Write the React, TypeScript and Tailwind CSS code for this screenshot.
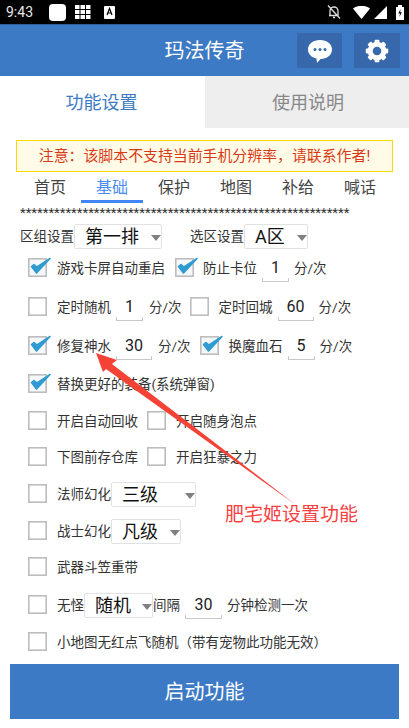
import React from "react";

const Box = ({ on }: { on?: boolean }) => (
  <svg width="24" height="24" viewBox="0 0 24 24" className="shrink-0 overflow-visible">
    <rect x="0.8" y="2.8" width="17.4" height="17.4" fill={on ? "#f4f8fb" : "#fff"} stroke="#bdbdbd" strokeWidth="1.6" />
    {on && <path d="M3.5 10.5 L8.5 17 L22 2.5 L9 11 L6 8.5 Z" fill="#2f9bd1" stroke="#2f9bd1" strokeWidth="1.6" strokeLinejoin="round" />}
  </svg>
);

const Num = ({ v, w }: { v: string; w: number }) => (
  <div className="flex flex-col items-center shrink-0" style={{ width: w }}>
    <div className="text-[16px] leading-[28px] text-[#222] h-[24px]">{v}</div>
    <div className="h-[4px] w-full border-x border-b border-[#c8c8c8]" />
  </div>
);

const Sel = ({ v, w, tri }: { v: string; w: number; tri: number }) => (
  <div className="h-[25px] border border-[#e2e2e2] rounded-[2px] flex items-center relative shrink-0 bg-white" style={{ width: w }}>
    <span className="text-[18px] leading-[25px] text-[#111] pl-[10px]">{v}</span>
    <span className="absolute top-[10px] w-0 h-0 border-x-[5px] border-x-transparent border-t-[6px] border-t-[#808080]" style={{ left: tri }} />
  </div>
);

const L = ({ children, cls = "" }: { children: React.ReactNode; cls?: string }) => (
  <span className={"text-[13.5px] text-[#333] whitespace-nowrap shrink-0 " + cls}>{children}</span>
);

export default function App() {
  return (
    <div className="w-[409px] h-[728px] bg-white relative overflow-hidden flex flex-col font-['Roboto','Noto_Sans_CJK_SC',sans-serif]">
      <div className="h-[24px] bg-black flex items-center text-white shrink-0 pl-[6px] pr-[5px]">
        <span className="text-[14px] text-[#e8e8e8] w-[43px]">9:43</span>
        <div className="w-[17px] h-[17px] bg-white rounded-[4px]" />
        <svg width="16" height="14" viewBox="0 0 16 14" className="ml-[9px]" fill="#fff">
          {[0, 5.5, 11].flatMap((x) => [0, 5, 10].map((y) => <rect key={x + "-" + y} x={x} y={y} width="4.5" height="4" />))}
        </svg>
        <svg width="11" height="13" viewBox="0 0 11 13" className="ml-[13px]">
          <rect width="11" height="13" rx="1" fill="#fff" />
          <path d="M3 9 L5.5 2.5 L8 9 M4 7 H7" stroke="#000" strokeWidth="1.2" fill="none" />
        </svg>
        <div className="flex-1" />
        <svg width="16" height="16" viewBox="0 0 16 16" fill="none" stroke="#ddd" strokeWidth="1.3">
          <path d="M4 11.5 V7 C4 4.5 6 3 8 3 C10 3 12 4.5 12 7 V11.5 H3 M7 13.5 H9 M2 1.5 L14 14.5" />
        </svg>
        <svg width="17" height="13" viewBox="0 0 17 13" className="ml-[11px]" fill="#fff"><path d="M0 2.5 C5 -1 12 -1 17 2.5 L8.5 13 Z" /></svg>
        <svg width="13" height="13" viewBox="0 0 13 13" className="ml-[4px]" fill="#fff"><path d="M13 0 V13 H0 Z" /></svg>
        <svg width="8" height="15" viewBox="0 0 8 15" className="ml-[9px]">
          <path d="M0 2 H2 V0 H6 V2 H8 V15 H0 Z" fill="#fff" />
          <path d="M4.5 4 L2.3 8.5 H4 L3.4 12 L5.8 7.2 H4.2 Z" fill="#000" />
        </svg>
      </div>
      <div className="h-[52px] bg-[#3d7ac5] border-t border-t-[#2f5f9b] flex items-center relative shrink-0">
        <div className="w-full text-center text-white text-[20px]">玛法传奇</div>
        <div className="absolute left-[297px] top-[8px] w-[45px] h-[35px] bg-[#3768ab] flex items-center justify-center">
          <svg width="26" height="24" viewBox="0 0 26 24">
            <path d="M13 1 C20 1 25 5 25 10.5 C25 16 20 20 13.5 20 L10 24 L9.5 19.6 C4.5 18.4 1 15 1 10.5 C1 5 6 1 13 1 Z" fill="#fff" />
            <circle cx="8" cy="10.5" r="1.5" fill="#3768ab" /><circle cx="13" cy="10.5" r="1.5" fill="#3768ab" /><circle cx="18" cy="10.5" r="1.5" fill="#3768ab" />
          </svg>
        </div>
        <div className="absolute left-[354px] top-[8px] w-[46px] h-[35px] bg-[#3768ab] flex items-center justify-center">
          <svg width="24" height="24" viewBox="0 0 24 24" fill="#fff">
            <circle cx="12" cy="12" r="6.8" fill="none" stroke="#fff" strokeWidth="5" />
            {[0, 45, 90, 135, 180, 225, 270, 315].map((a) => (
              <rect key={a} x="9.6" y="0.8" width="4.8" height="5" rx="1" transform={`rotate(${a} 12 12)`} />
            ))}
          </svg>
        </div>
      </div>
      <div className="h-[52px] flex shrink-0">
        <div className="w-[205px] flex items-center justify-center text-[18px] text-[#3d7ac5] pr-[2px]">功能设置</div>
        <div className="flex-1 bg-[#eeeeee] flex items-center justify-center text-[18px] text-[#888] pl-[2px]">使用说明</div>
      </div>
      <div className="mx-[16px] mt-[12px] h-[32px] border border-[#ffd800] bg-[#fffbe6] flex items-center justify-center text-[14.9px] text-[#d93a16] shrink-0 whitespace-nowrap">
        注意：该脚本不支持当前手机分辨率，请联系作者!
      </div>
      <div className="h-[31px] flex shrink-0 text-[16px] text-[#444] pl-[19px]">
        {["首页", "基础", "保护", "地图", "补给", "喊话"].map((t, i) => (
          <div key={t} className="w-[62px] flex justify-center relative pt-[4px]">
            <span className={i === 1 ? "text-[#4a8cf0]" : ""}>{t}</span>
            {i === 1 && <div className="absolute left-0 bottom-0 w-[62px] h-[3px] bg-[#4285f4]" />}
          </div>
        ))}
      </div>
      <div className="h-[20px] pl-[20px] text-[13.2px] leading-[19px] text-[#333] shrink-0 whitespace-nowrap">
        {"*".repeat(58)}
      </div>
      <div className="h-[26px] flex items-center pl-[20px] shrink-0">
        <L>区组设置</L>
        <Sel v="第一排" w={88} tri={76} />
        <L cls="ml-[28px]">选区设置</L>
        <Sel v="A区" w={64} tri={52} />
      </div>
      <div className="pl-[28px] flex flex-col shrink-0">
        <div className="h-[38px] flex items-center">
          <Box on /><L cls="ml-[5px]">游戏卡屏自动重启</L>
          <div className="ml-[10px]"><Box on /></div><L cls="ml-[4px]">防止卡位</L>
          <div className="ml-[5px]"><Num v="1" w={27} /></div><L cls="ml-[5px]">分/次</L>
        </div>
        <div className="h-[40px] flex items-center">
          <Box /><L cls="ml-[5px]">定时随机</L>
          <div className="ml-[5px]"><Num v="1" w={27} /></div><L cls="ml-[6px]">分/次</L>
          <div className="ml-[8px]"><Box /></div><L cls="ml-[5px]">定时回城</L>
          <div className="ml-[5px]"><Num v="60" w={36} /></div><L cls="ml-[5px]">分/次</L>
        </div>
        <div className="h-[38px] flex items-center">
          <Box on /><L cls="ml-[5px]">修复神水</L>
          <div className="ml-[5px]"><Num v="30" w={36} /></div><L cls="ml-[6px]">分/次</L>
          <div className="ml-[9px]"><Box on /></div><L cls="ml-[5px]">换魔血石</L>
          <div className="ml-[5px]"><Num v="5" w={27} /></div><L cls="ml-[5px]">分/次</L>
        </div>
        <div className="h-[38px] flex items-center">
          <Box on /><L cls="ml-[5px]">替换更好的装备(系统弹窗)</L>
        </div>
        <div className="h-[36px] flex items-center">
          <Box /><L cls="ml-[5px]">开启自动回收</L>
          <div className="ml-[9px]"><Box /></div><L cls="ml-[5px]">开启随身泡点</L>
        </div>
        <div className="h-[36px] flex items-center">
          <Box /><L cls="ml-[5px]">下图前存仓库</L>
          <div className="ml-[9px]"><Box /></div><L cls="ml-[5px]">开启狂暴之力</L>
        </div>
        <div className="h-[38px] flex items-center">
          <Box /><L cls="ml-[5px]">法师幻化</L><Sel v="三级" w={85} tri={73} />
        </div>
        <div className="h-[36px] flex items-center">
          <Box /><L cls="ml-[5px]">战士幻化</L><Sel v="凡级" w={70} tri={58} />
        </div>
        <div className="h-[36px] flex items-center">
          <Box /><L cls="ml-[5px]">武器斗笠重带</L>
        </div>
        <div className="h-[40px] flex items-center">
          <Box /><L cls="ml-[5px]">无怪</L><Sel v="随机" w={69} tri={57} />
          <L>间隔</L>
          <div className="ml-[5px]"><Num v="30" w={37} /></div><L cls="ml-[5px]">分钟检测一次</L>
        </div>
        <div className="h-[34px] flex items-center">
          <Box /><L cls="ml-[5px]">小地图无红点飞随机（带有宠物此功能无效）</L>
        </div>
      </div>
      <div className="mx-[10px] mt-[5px] h-[55px] bg-[#3d7ac5] flex items-center justify-center text-white text-[20px] shrink-0">启动功能</div>

      <svg className="absolute left-0 top-0 pointer-events-none" width="409" height="728">
        <path d="M96 353 L117 360 L112 364 L296 505 L106 369 L103 372 Z" fill="#f44336" />
      </svg>
      <div className="absolute left-[225px] top-[502px] text-[19px] leading-[26px] text-[#f8413f] whitespace-nowrap">肥宅姬设置功能</div>
    </div>
  );
}
